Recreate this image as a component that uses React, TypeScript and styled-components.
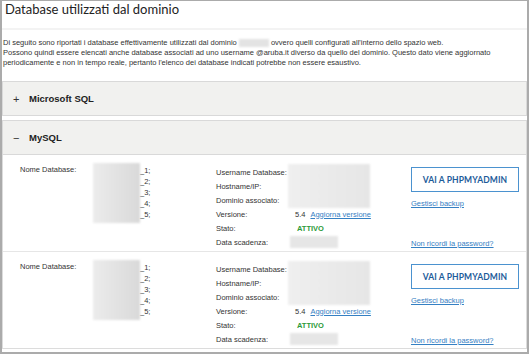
import styled, { createGlobalStyle } from "styled-components";

const GlobalStyle = createGlobalStyle`
  html, body {
    margin: 0;
    padding: 0;
    background: #fff;
  }
  body {
    font-family: "Liberation Sans", Arial, sans-serif;
    color: #333;
  }
`;

const Frame = styled.div`
  width: 529px;
  height: 354px;
  box-sizing: border-box;
  border: 2px solid #ababab;
  border-top-width: 1px;
  overflow: hidden;
  background: #fff;
`;

const TitleBar = styled.div`
  height: 27px;
  padding-left: 3px;
  border-bottom: 2px solid #f3f3f3;
`;

const Title = styled.h1`
  margin: 0;
  font-family: Lato, "Open Sans", sans-serif;
  font-weight: 400;
  font-size: 13px;
  line-height: 16px;
  color: #222;
`;

const Intro = styled.p`
  margin: 8px 0 0 1px;
  font-size: 7.5px;
  line-height: 10px;
  color: #333;
  white-space: nowrap;
`;

const Blur = styled.span<{ w: number; h: number }>`
  display: inline-block;
  width: ${(p) => p.w}px;
  height: ${(p) => p.h}px;
  background: linear-gradient(90deg, #ececec, #d9d9d9);
  filter: blur(1px);
  vertical-align: middle;
`;

const Accordion = styled.div`
  margin-top: 13px;
  display: flex;
  flex-direction: column;
  gap: 4px;
`;

const Section = styled.div``;

const Header = styled.div`
  height: 33px;
  border: 1px solid #d9d9d9;
  background: #f1f1ef;
  display: flex;
  align-items: center;
  padding-left: 10px;
`;

const Sign = styled.span`
  width: 16px;
  font-size: 11px;
  color: #333;
`;

const HeaderLabel = styled.span`
  font-weight: 700;
  font-size: 9.5px;
  color: #222;
`;

const Body = styled.div`
  border: 1px solid #dcdcdc;
  border-top: none;
`;

const Row = styled.div`
  display: grid;
  grid-template-columns: 73px 123px 195px 1fr;
  height: 97px;
  box-sizing: border-box;
  padding: 9px 0 0 17px;
  border-bottom: 1px solid #e6e6e6;
  font-size: 7.5px;
  &:last-child {
    border-bottom: none;
    height: 96px;
  }
`;

const Label = styled.div`
  line-height: 11px;
  color: #333;
`;

const Names = styled.div`
  display: flex;
  align-items: flex-start;
`;

const Suffixes = styled.div`
  margin-top: 1px;
  line-height: 11px;
  color: #333;
`;

const Details = styled.div`
  display: grid;
  grid-template-columns: 72px 1fr;
  grid-auto-rows: 14px;
  margin-top: 1px;
  align-items: center;
`;

const DetailLabel = styled.div<{ row: number }>`
  grid-column: 1;
  grid-row: ${(p) => p.row};
  color: #333;
`;

const DetailValue = styled.div<{ row: number; span?: number; pad?: number }>`
  grid-column: 2;
  grid-row: ${(p) => p.row} / span ${(p) => p.span ?? 1};
  padding-left: ${(p) => p.pad ?? 0}px;
  display: flex;
  align-items: center;
  gap: 5px;
  height: 100%;
`;

const Active = styled.span`
  color: #2e9b3a;
  font-weight: 700;
`;

const Link = styled.a`
  color: #3580c3;
  text-decoration: underline;
  cursor: pointer;
`;

const Actions = styled.div`
  display: flex;
  flex-direction: column;
  align-items: flex-start;
`;

const Button = styled.button`
  margin-top: 3px;
  width: 108px;
  height: 25px;
  border: 1.5px solid #4b92cf;
  background: #fff;
  color: #1d5c9a;
  font-family: Lato, "Open Sans", sans-serif;
  font-weight: 700;
  font-size: 8.5px;
  letter-spacing: 0.1px;
  padding: 0;
`;

const ActionLink = styled(Link)<{ top: number }>`
  margin-top: ${(p) => p.top}px;
  line-height: 11px;
`;

const DbRow = () => (
  <Row>
    <Label>Nome Database:</Label>
    <Names>
      <Blur w={47} h={60} style={{ marginTop: -1 }} />
      <Suffixes>
        _1;<br />_2;<br />_3;<br />_4;<br />_5;
      </Suffixes>
    </Names>
    <Details>
      <DetailLabel row={1}>Username Database:</DetailLabel>
      <DetailLabel row={2}>Hostname/IP:</DetailLabel>
      <DetailLabel row={3}>Dominio associato:</DetailLabel>
      <DetailLabel row={4}>Versione:</DetailLabel>
      <DetailLabel row={5}>Stato:</DetailLabel>
      <DetailLabel row={6}>Data scadenza:</DetailLabel>
      <DetailValue row={1} span={3}>
        <Blur w={82} h={44} style={{ background: "linear-gradient(90deg, #efefef, #e6e6e6)" }} />
      </DetailValue>
      <DetailValue row={4} pad={7}>
        <span>5.4</span>
        <Link>Aggiorna versione</Link>
      </DetailValue>
      <DetailValue row={5} pad={9}>
        <Active>ATTIVO</Active>
      </DetailValue>
      <DetailValue row={6} pad={2}>
        <Blur w={48} h={12} style={{ background: "#e6e6e6" }} />
      </DetailValue>
    </Details>
    <Actions>
      <Button>VAI A PHPMYADMIN</Button>
      <ActionLink top={6}>Gestisci backup</ActionLink>
      <ActionLink top={29}>Non ricordi la password?</ActionLink>
    </Actions>
  </Row>
);

export default function App() {
  return (
    <>
      <GlobalStyle />
      <Frame>
        <TitleBar>
          <Title>Database utilizzati dal dominio</Title>
        </TitleBar>
        <Intro>
          Di seguito sono riportati i database effettivamente utilizzati dal dominio{" "}
          <Blur w={30} h={8} style={{ background: "#e3e3e3" }} /> ovvero quelli configurati
          all'interno dello spazio web.
          <br />
          Possono quindi essere elencati anche database associati ad uno username @aruba.it diverso da
          quello del dominio. Questo dato viene aggiornato
          <br />
          periodicamente e non in tempo reale, pertanto l'elenco dei database indicati potrebbe non
          essere esaustivo.
        </Intro>
        <Accordion>
          <Section>
            <Header>
              <Sign>+</Sign>
              <HeaderLabel>Microsoft SQL</HeaderLabel>
            </Header>
          </Section>
          <Section>
            <Header>
              <Sign>−</Sign>
              <HeaderLabel>MySQL</HeaderLabel>
            </Header>
            <Body>
              <DbRow />
              <DbRow />
            </Body>
          </Section>
        </Accordion>
      </Frame>
    </>
  );
}
